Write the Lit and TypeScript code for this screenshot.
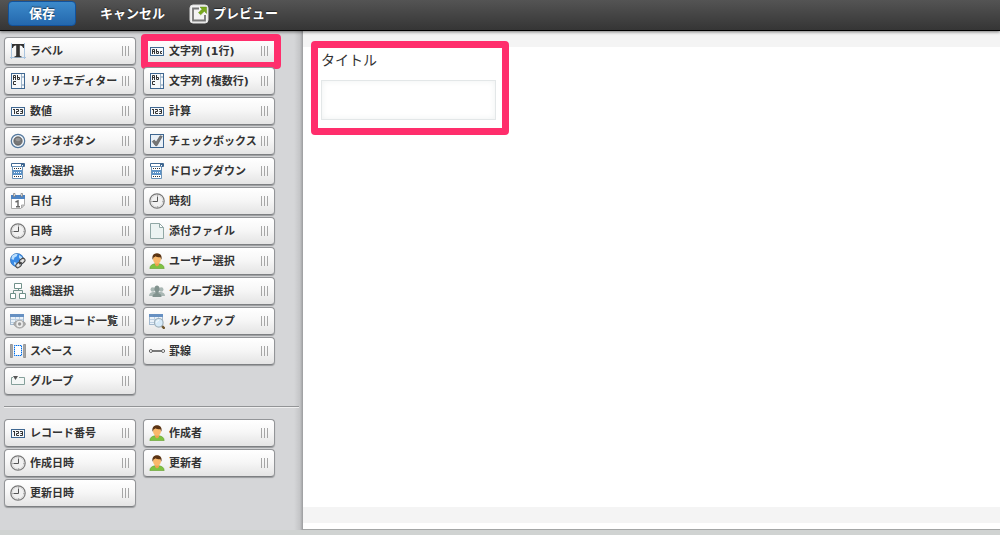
import { LitElement, html, css, svg, nothing, type SVGTemplateResult } from "lit";
import { customElement, property } from "lit/decorators.js";

const digits = svg`
  <rect x="1.5" y="4.5" width="13" height="8" fill="#f6f9fc" stroke="#3f6791"/>
  <path fill="none" stroke="#333" d="M4.5 6v5M3 6.5h1M6 6.5h2.500v2h-2v2H9M10 6.500h2.500v4H10M10.500 8.500h2"/>`;

const clock = svg`
  <circle cx="8" cy="8" r="7.200" fill="#f1f1f1" stroke="#777" stroke-width="1.200"/>
  <circle cx="8" cy="8" r="5.800" fill="none" stroke="#d8d8d8" stroke-width=".8"/>
  <path fill="none" stroke="#555" d="M8.500 3.500v5h-5"/>
  <path fill="none" stroke="#888" d="M8.500 1.500v1M8.500 13.500v1M1.500 8.500h1M13.500 8.500h1"/>`;

const textArea = svg`
  <rect x="1.500" y=".5" width="13" height="15" fill="#f6f9fc" stroke="#3f6791"/>
  <path fill="none" stroke="#9db4c9" d="M11.500 1v14"/>
  <path fill="#7894ad" d="M12.500 3h1v2h-1zM12.500 11h1v2h-1z"/>
  <path fill="none" stroke="#333" d="M3.500 7V2.500h2V7M3.500 4.500h2M7.500 2v4.500h2v-2h-2M6 8.500H3.500v3H6"/>`;

const dropList = svg`
  <path fill="#fff" stroke="#3f6791" d="M1.500.5h13v3h-13z"/>
  <path fill="#3f6791" d="M11 1h3v3h-3z"/>
  <path fill="#fff" d="M12 2h1v1h-1z"/>
  <path fill="#fff" stroke="#6c93b8" d="M2.500 3.500h10v12h-10z"/>
  <path fill="#5b92c7" d="M3 7h9v5H3z"/>
  <path fill="none" stroke="#333" stroke-dasharray="1 1" d="M4 5.500h7M4 13.500h7"/>
  <path fill="none" stroke="#fff" stroke-dasharray="1 1" d="M4 9.500h7"/>`;

const user = svg`
  <path fill="#7fc241" stroke="#5f9d2c" stroke-width=".6" d="M.8 15.500c.2-3 2.200-4.300 5-4.700h4.400c2.800.4 4.800 1.700 5 4.700z"/>
  <path fill="#eda04f" d="M6 9h4v3l-2 1.500L6 12z"/>
  <ellipse cx="8" cy="6.300" rx="3.900" ry="4.500" fill="#f9b86a"/>
  <path fill="#5b3413" d="M3.700 6.800C2.500 2.600 4.800.2 8 .2s5.500 2.400 4.300 6.600l-.9-2.500C9.500 4.500 7.500 4 6.500 3.200 6 4 5 4.300 4.600 4.500z"/>`;

const miniTable = svg`
  <rect x=".5" y="1.500" width="13" height="10" fill="#eaf1f8" stroke="#a3b9cf"/>
  <path fill="#6690c2" d="M0 1h14v3H0z"/>
  <path fill="none" stroke="#bdd0e2" d="M1 6.500h12M1 9.500h12M5.500 4v8M9.500 4v8"/>`;

const icons: Record<string, SVGTemplateResult> = {
  digits, clock, textArea, dropList, user,
  label: svg`
    <path fill="none" stroke="#a9c4df" d="M1.500 0v16M14.500 0v16M0 14.500h16"/>
    <path fill="#333" d="M2 1h12v4h-1c-.3-1.600-1-2.500-2.800-2.500H9.800V12c0 1 .5 1.300 1.800 1.400v.8H4.400v-.8c1.300-.1 1.800-.4 1.800-1.400V2.500h-.4C4 2.500 3.300 3.400 3 5H2z"/>`,
  textLine: svg`
    <rect x="1.500" y="4.500" width="13" height="8" fill="#f6f9fc" stroke="#3f6791"/>
    <path fill="none" stroke="#333" d="M3.500 11V6.500h2V11M3.500 8.500h2M7.500 6v4.500h2v-2h-2M13 8.500h-1.500v2H13"/>`,
  radio: svg`
    <circle cx="8" cy="8" r="6.700" fill="#edf3f8" stroke="#54789d" stroke-width="1.200"/>
    <circle cx="8" cy="8" r="4.200" fill="#777" stroke="#555" stroke-width=".7"/>
    <ellipse cx="8" cy="6.500" rx="2.500" ry="1.800" fill="#999"/>`,
  check: svg`
    <rect x="1.500" y="1.500" width="13" height="13" fill="#e9f0f7" stroke="#3f6791"/>
    <path fill="#777" stroke="#555" stroke-width=".6" d="M3.300 8.500l2-1.500 1.800 2.200 4-6.500 2.200.7-5.300 9.300H6.500z"/>`,
  date: svg`
    <path fill="#fff" stroke="#aaa" d="M1.500 4.500h13v7l-3.500 4H1.500z"/>
    <path fill="#4c83c3" d="M1 2h14v4H1z"/>
    <path fill="#fff" stroke="#777" stroke-width=".7" d="M3.500.5h1.500v3H3.500zM11 .5h1.500v3H11z"/>
    <path fill="none" stroke="#666" stroke-width="1.400" d="M5.500 9L8 7.800V14M6 13.800h4"/>
    <path fill="#ddd" stroke="#999" stroke-width=".8" d="M11.500 15v-3h3z"/>`,
  file: svg`
    <path fill="#ecf3f2" stroke="#91a7a5" d="M1.500.5h9l4 4v11h-13z"/>
    <path fill="#fff" stroke="#91a7a5" d="M10.500.5v4h4z"/>`,
  link: svg`
    <circle cx="7" cy="7" r="6.600" fill="#3a8be6" stroke="#2464ad" stroke-width=".6"/>
    <path fill="#b9defd" d="M2 3c1.600-2 4-2.300 5.600-2L6.800 3.200 4.500 4.500 3.600 7 1.400 6zM9 2l3 2 .5 3-2-.5L9 4.500zM4 9l2.500.8-.5 3-2-1.500z"/>
    <g fill="none" stroke="#444" stroke-width="1"><rect x="5.500" y="10" width="6" height="4.200" rx="2.100" fill="#ccc" transform="rotate(-42 8.500 12)"/><rect x="9.300" y="5.800" width="6" height="4.200" rx="2.100" fill="#ccc" transform="rotate(-42 12.300 8)"/></g>
    <path stroke="#eee" stroke-width="1.400" d="M7.500 13l2-1.900M11.300 9l2-1.900"/>
    <path stroke="#444" stroke-width="1.600" d="M9.300 11.200l2.200-2.100"/>`,
  org: svg`
    <path fill="#fff" stroke="#71918a" d="M4.500.5h7v5h-7zM.5 10.500h5v5h-5zM9.500 10.500h6v5h-6z"/>
    <path fill="none" stroke="#71918a" d="M8.500 6v2M3.500 10V7.500h9V10"/>`,
  group: svg`
    <g fill="#a9b7b4"><circle cx="3.800" cy="6.500" r="2.300"/><circle cx="12.200" cy="6.500" r="2.300"/><path d="M0 13c0-2.500 1.500-3.600 3.800-4h8.400c2.300.4 3.800 1.500 3.800 4z"/></g>
    <path fill="#82938f" d="M3.500 14c0-2.300 1-3.200 3-3.700V9C4.600 6.500 5.200 2.500 8 2.500S11.400 6.500 9.500 9v1.300c2 .5 3 1.400 3 3.700z"/>`,
  related: svg`${miniTable}
    <path fill="#aaa" stroke="#999" stroke-width=".6" d="M3.500 11C6 6 13 6 15.700 11 13 16.500 6 16.500 3.500 11z"/>
    <circle cx="9.600" cy="11" r="3.300" fill="#eee"/><circle cx="9.600" cy="11" r="1.700" fill="#999"/>`,
  lookup: svg`${miniTable}
    <path stroke="#6d542c" stroke-width="2.400" stroke-linecap="round" d="M13 13l1.800 1.800"/>
    <circle cx="9.800" cy="9.800" r="4.300" fill="#d6eaf8" stroke="#9fb0bb" stroke-width="1.200"/>
    <path fill="none" stroke="#fff" d="M7.500 9.500c.3-1.300 1-1.900 2.300-2"/>`,
  rule: svg`
    <path stroke="#444" stroke-width="1.400" d="M3 8h10"/>
    <circle cx="1.900" cy="8" r="1.500" fill="#fff" stroke="#555" stroke-width=".9"/>
    <circle cx="14.100" cy="8" r="1.500" fill="#fff" stroke="#555" stroke-width=".9"/>`,
  space: svg`
    <path fill="#aaa" stroke="#888" stroke-width=".8" d="M.4 1.500h2v13h-2zM13.600 1.500h2v13h-2z"/>
    <rect x="4" y="2" width="8" height="11" fill="#fff"/>
    <rect x="4.500" y="2.500" width="7" height="10" fill="none" stroke="#9cc8f8"/>
    <rect x="4.500" y="2.500" width="7" height="10" fill="none" stroke="#006be6" stroke-dasharray="1 1" stroke-dashoffset=".5"/>`,
  section: svg`
    <path fill="#f4f7f6" d="M1 4h14v8H1z"/>
    <path fill="none" stroke="#85a09b" d="M3 4.500H1.500v7h13v-7H9"/>
    <path fill="#555" d="M3 3h5L5.500 7z"/>`,
};

interface Field {
  icon: string;
  name: string;
  marked?: boolean;
}

const inputFields: Field[] = [
  { icon: "label", name: "ラベル" },
  { icon: "textLine", name: "文字列 (1行)", marked: true },
  { icon: "textArea", name: "リッチエディター" },
  { icon: "textArea", name: "文字列 (複数行)" },
  { icon: "digits", name: "数値" },
  { icon: "digits", name: "計算" },
  { icon: "radio", name: "ラジオボタン" },
  { icon: "check", name: "チェックボックス" },
  { icon: "dropList", name: "複数選択" },
  { icon: "dropList", name: "ドロップダウン" },
  { icon: "date", name: "日付" },
  { icon: "clock", name: "時刻" },
  { icon: "clock", name: "日時" },
  { icon: "file", name: "添付ファイル" },
  { icon: "link", name: "リンク" },
  { icon: "user", name: "ユーザー選択" },
  { icon: "org", name: "組織選択" },
  { icon: "group", name: "グループ選択" },
  { icon: "related", name: "関連レコード一覧" },
  { icon: "lookup", name: "ルックアップ" },
  { icon: "space", name: "スペース" },
  { icon: "rule", name: "罫線" },
  { icon: "section", name: "グループ" },
];

const recordFields: Field[] = [
  { icon: "digits", name: "レコード番号" },
  { icon: "user", name: "作成者" },
  { icon: "clock", name: "作成日時" },
  { icon: "user", name: "更新者" },
  { icon: "clock", name: "更新日時" },
];

@customElement("field-palette")
class FieldPalette extends LitElement {
  @property({ attribute: false }) fields: Field[] = [];

  static styles = css`
    :host { display: block; }
    .list {
      display: grid;
      grid-template-columns: repeat(2, 132px);
      gap: 2px 7px;
      margin: 0;
      padding: 0;
      list-style: none;
    }
    .item { position: relative; }
    .field {
      display: flex;
      align-items: center;
      gap: 4px;
      box-sizing: border-box;
      width: 100%;
      height: 28px;
      padding: 0 6px 0 5px;
      border: 1px solid #939598;
      border-bottom-color: #7d7f82;
      border-radius: 4px;
      background: linear-gradient(#fff, #f7f7f7 45%, #e4e4e4);
      box-shadow: 0 1px 1px #9a9c9e;
      color: #333;
      font: bold 11px/16px "DejaVu Sans", "Noto Sans CJK JP", sans-serif;
      white-space: nowrap;
      cursor: move;
    }
    .icon { flex: none; width: 16px; height: 16px; }
    .name { flex: 1; min-width: 0; padding-top: 2px; text-align: left; }
    .grip {
      flex: none;
      width: 7px;
      height: 10px;
      background: repeating-linear-gradient(90deg, #a6a6a6 0 1px, transparent 1px 3px);
    }
    .marker {
      position: absolute;
      inset: -3px -6px -4px -2px;
      border: 7px solid #ff2e6c;
      border-radius: 4px;
      pointer-events: none;
    }
  `;

  render() {
    return html`<ul class="list">
      ${this.fields.map((f) => html`<li class="item">
        <button class="field" type="button">
          <svg class="icon" viewBox="0 0 16 16" aria-hidden="true">${icons[f.icon]}</svg>
          <span class="name">${f.name}</span>
          <span class="grip"></span>
        </button>
        ${f.marked ? html`<div class="marker"></div>` : nothing}
      </li>`)}
    </ul>`;
  }
}

@customElement("app-root")
class AppRoot extends LitElement {
  static styles = css`
    :host {
      display: flex;
      flex-direction: column;
      box-sizing: border-box;
      min-height: 100vh;
      padding-bottom: 5px;
      background: #d0d3d2;
      color: #333;
      font-family: "Noto Sans CJK JP", sans-serif;
    }
    .toolbar {
      display: flex;
      align-items: flex-start;
      box-sizing: border-box;
      height: 31px;
      padding: 1px 8px 0;
      border-bottom: 1px solid #000;
      background: linear-gradient(#545454, #353535);
      box-shadow: 0 1px 3px rgba(0, 0, 0, 0.5);
      position: relative;
    }
    .action {
      display: flex;
      align-items: center;
      gap: 4px;
      height: 25px;
      padding: 0 0 2px;
      border: 0;
      background: none;
      color: #fff;
      font: bold 13px/20px "Noto Sans CJK JP", sans-serif;
      text-shadow: 0 -1px 1px rgba(0, 0, 0, 0.5);
      cursor: pointer;
    }
    .save {
      justify-content: center;
      width: 68px;
      margin-right: 24px;
      border: 1px solid #12529c;
      border-radius: 4px;
      background: linear-gradient(#3c8acb, #2468ad);
    }
    .cancel { margin-right: 24px; }
    .preview { padding: 0; }
    .preview-icon { width: 20px; height: 20px; }
    .preview-text { padding-bottom: 2px; }
    .workspace { display: flex; flex: 1; }
    .sidebar {
      flex: none;
      box-sizing: border-box;
      width: 303px;
      padding: 6px 4px 8px;
      background: linear-gradient(to left, #9b9c9e, #c4c5c7 3px, #d5d6d8 9px);
    }
    .divider {
      height: 1px;
      margin: 11px 0 12px;
      border: 0;
      background: #929496;
      box-shadow: 0 1px 0 #efefef;
    }
    .canvas {
      flex: 1;
      display: flex;
      flex-direction: column;
      min-width: 0;
      padding-bottom: 6px;
      border-bottom: 1px solid #a4a6a6;
      background: #fff;
    }
    .band { height: 16px; background: #f4f4f4; }
    .form { flex: 1; padding: 0 8px; }
    .entry {
      position: relative;
      display: flex;
      flex-direction: column;
      align-items: flex-start;
      width: 185px;
      padding: 2px 10px 4px;
      gap: 11px;
    }
    .entry-label { font: 14px/20px "Noto Sans CJK JP", sans-serif; }
    .entry-input {
      box-sizing: border-box;
      width: 175px;
      height: 40px;
      padding: 0 8px;
      border: 1px solid #e3e7e8;
      border-radius: 0;
      background: #fff;
      box-shadow: inset 0 0 6px #eef1f1;
      font: 14px/20px "Noto Sans CJK JP", sans-serif;
      outline: 0;
    }
    .marker {
      position: absolute;
      inset: -6px 7px -11px 0;
      border: 7px solid #ff2e6c;
      border-radius: 4px;
      pointer-events: none;
    }
  `;

  render() {
    return html`
      <header class="toolbar">
        <button class="action save" type="button">保存</button>
        <button class="action cancel" type="button">キャンセル</button>
        <button class="action preview" type="button">
          <svg class="preview-icon" viewBox="0 0 20 20" aria-hidden="true">
            <rect x="1" y="1" width="18" height="18" rx="3" fill="#f3f3f3" stroke="#ddd"/>
            <path fill="none" stroke="#777" stroke-width="1.800" d="M10 4.500H4v12h12V11"/>
            <path fill="#78a91d" stroke="#5d8a12" stroke-width=".5" d="M11 3h6.500v6.500l-2.200-2.200-3.600 3.500-2.200-2.100L13 5.200z"/>
          </svg>
          <span class="preview-text">プレビュー</span>
        </button>
      </header>
      <main class="workspace">
        <aside class="sidebar">
          <field-palette .fields=${inputFields}></field-palette>
          <hr class="divider" />
          <field-palette .fields=${recordFields}></field-palette>
        </aside>
        <section class="canvas">
          <div class="band"></div>
          <div class="form">
            <div class="entry">
              <label class="entry-label" for="title">タイトル</label>
              <input class="entry-input" id="title" type="text" />
              <div class="marker"></div>
            </div>
          </div>
          <div class="band"></div>
        </section>
      </main>
    `;
  }
}
